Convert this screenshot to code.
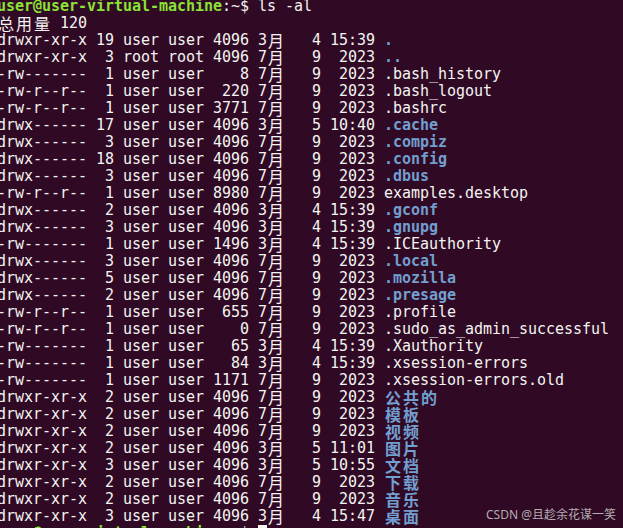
import React from "react";

const isWide = (ch: string) => /[\u2E80-\u9FFF\uFF00-\uFFEF]/.test(ch);

function Text({ t, className }: { t: string; className: string }) {
  const parts: React.ReactNode[] = [];
  let buf = "";
  let k = 0;
  for (const ch of Array.from(t)) {
    if (isWide(ch)) {
      if (buf) {
        parts.push(<span key={k++}>{buf}</span>);
        buf = "";
      }
      parts.push(
        <span
          key={k++}
          className="inline-block w-[18px] text-center text-[16px] leading-[17px] align-top"
          style={{ fontFamily: '"Noto Sans CJK SC", sans-serif' }}
        >
          {ch}
        </span>
      );
    } else buf += ch;
  }
  if (buf) parts.push(<span key={k++}>{buf}</span>);
  return <span className={className}>{parts}</span>;
}

const entries: [string, string, boolean][] = [
  ["drwxr-xr-x 19 user user 4096 3月   4 15:39 ", ".", true],
  ["drwxr-xr-x  3 root root 4096 7月   9  2023 ", "..", true],
  ["-rw-------  1 user user    8 7月   9  2023 ", ".bash_history", false],
  ["-rw-r--r--  1 user user  220 7月   9  2023 ", ".bash_logout", false],
  ["-rw-r--r--  1 user user 3771 7月   9  2023 ", ".bashrc", false],
  ["drwx------ 17 user user 4096 3月   5 10:40 ", ".cache", true],
  ["drwx------  3 user user 4096 7月   9  2023 ", ".compiz", true],
  ["drwx------ 18 user user 4096 7月   9  2023 ", ".config", true],
  ["drwx------  3 user user 4096 7月   9  2023 ", ".dbus", true],
  ["-rw-r--r--  1 user user 8980 7月   9  2023 ", "examples.desktop", false],
  ["drwx------  2 user user 4096 3月   4 15:39 ", ".gconf", true],
  ["drwx------  3 user user 4096 3月   4 15:39 ", ".gnupg", true],
  ["-rw-------  1 user user 1496 3月   4 15:39 ", ".ICEauthority", false],
  ["drwx------  3 user user 4096 7月   9  2023 ", ".local", true],
  ["drwx------  5 user user 4096 7月   9  2023 ", ".mozilla", true],
  ["drwx------  2 user user 4096 7月   9  2023 ", ".presage", true],
  ["-rw-r--r--  1 user user  655 7月   9  2023 ", ".profile", false],
  ["-rw-r--r--  1 user user    0 7月   9  2023 ", ".sudo_as_admin_successful", false],
  ["-rw-------  1 user user   65 3月   4 15:39 ", ".Xauthority", false],
  ["-rw-------  1 user user   84 3月   4 15:39 ", ".xsession-errors", false],
  ["-rw-------  1 user user 1171 7月   9  2023 ", ".xsession-errors.old", false],
  ["drwxr-xr-x  2 user user 4096 7月   9  2023 ", "公共的", true],
  ["drwxr-xr-x  2 user user 4096 7月   9  2023 ", "模板", true],
  ["drwxr-xr-x  2 user user 4096 7月   9  2023 ", "视频", true],
  ["drwxr-xr-x  2 user user 4096 3月   5 11:01 ", "图片", true],
  ["drwxr-xr-x  3 user user 4096 3月   5 10:55 ", "文档", true],
  ["drwxr-xr-x  2 user user 4096 7月   9  2023 ", "下载", true],
  ["drwxr-xr-x  2 user user 4096 7月   9  2023 ", "音乐", true],
  ["drwxr-xr-x  3 user user 4096 3月   4 15:47 ", "桌面", true],
];

function Line({ children }: { children: React.ReactNode }) {
  return <div className="h-[17px] leading-[17px] whitespace-pre">{children}</div>;
}

export default function App() {
  return (
    <div className="relative w-[623px] h-[528px] overflow-hidden bg-[#300a24]">
      <div
        className="mt-[-2px] ml-[-3px] text-[15px] tracking-[-0.03px] text-[#f4f4f2]"
        style={{ fontFamily: '"DejaVu Sans Mono", "Noto Sans CJK SC", monospace' }}
      >
        <Line>
          <span className="text-[#8ae234] font-bold">user@user-virtual-machine</span>
          <span>:~$ ls -al</span>
        </Line>
        <Line>
          <Text t="总用量 120" className="" />
        </Line>
        {entries.map(([meta, name, dir], i) => (
          <Line key={i}>
            <Text t={meta} className="" />
            <Text t={name} className={dir ? "text-[#729fcf] font-bold" : ""} />
          </Line>
        ))}
        <Line>
          <span className="text-[#8ae234] font-bold">user@user-virtual-machine</span>
          <span>:~$ </span>
          <span className="inline-block w-[9px] h-[17px] align-top bg-[#f4f4f2]" />
        </Line>
      </div>
      <div
        className="absolute right-[7px] top-[506px] text-[12px] leading-[18px] text-[#b4acb2]"
        style={{ fontFamily: '"Noto Sans", "Noto Sans CJK SC", sans-serif' }}
      >
        CSDN @且趁余花谋一笑
      </div>
    </div>
  );
}
